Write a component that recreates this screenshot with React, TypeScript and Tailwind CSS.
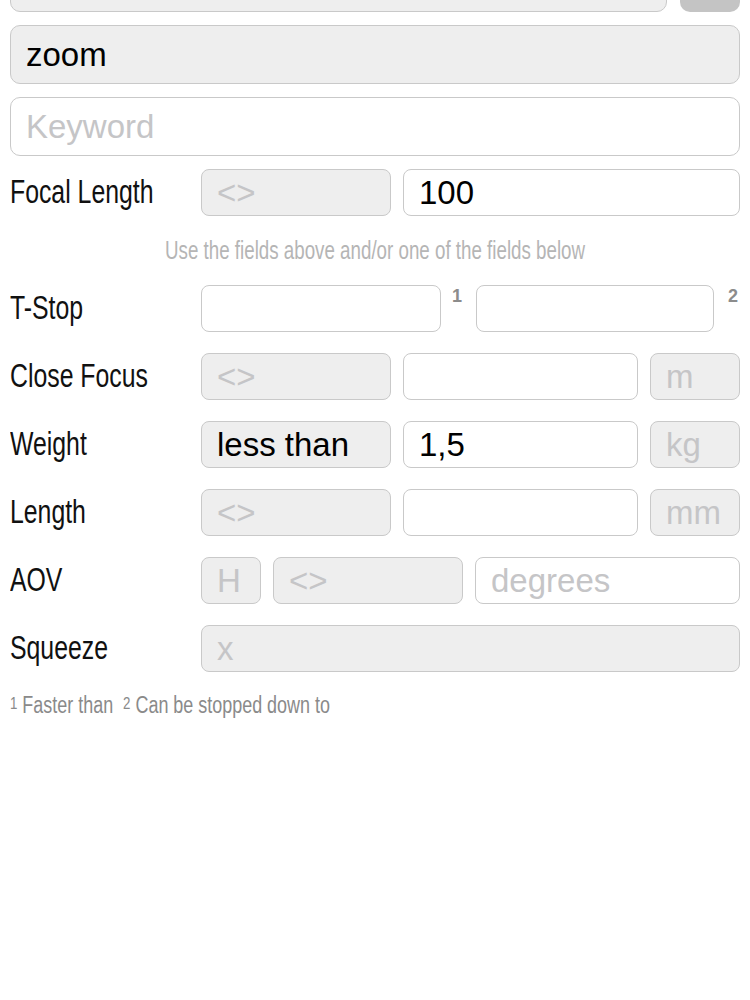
import React from "react";

const sans = "font-['Liberation_Sans',Arial,sans-serif]";

function Narrow({
  children,
  scale = "scale-x-[0.73]",
  origin = "origin-left",
}: {
  children: React.ReactNode;
  scale?: string;
  origin?: string;
}) {
  return <span className={`inline-block whitespace-nowrap ${origin} ${scale}`}>{children}</span>;
}

function Field({
  text,
  placeholder,
  gray,
  className = "",
  big,
}: {
  text?: string;
  placeholder?: string;
  gray?: boolean;
  className?: string;
  big?: boolean;
}) {
  return (
    <div
      className={`${className} flex items-center border border-[#c9c9c9] px-[15px] ${
        big ? "h-[59px] rounded-[10px]" : "h-[47px] rounded-[8px]"
      } ${gray ? "bg-[#eeeeee]" : "bg-white"} ${sans} text-[33px] leading-none overflow-hidden whitespace-nowrap`}
    >
      {text ? (
        <span className="text-black">{text}</span>
      ) : placeholder ? (
        <span className="text-[#c5c5c7]">{placeholder}</span>
      ) : null}
    </div>
  );
}

function Label({ children }: { children: React.ReactNode }) {
  return (
    <div className={`w-[191px] shrink-0 pb-[4px] ${sans} text-[34px] leading-none text-[#111111]`}>
      <Narrow>{children}</Narrow>
    </div>
  );
}

function Sup({ n, className }: { n: string; className: string }) {
  return (
    <div className={`${className} self-start ${sans} font-bold text-[18px] leading-none text-[#8c8c8c]`}>
      {n}
    </div>
  );
}

export default function App() {
  return (
    <div className="w-[750px] h-[1000px] bg-white px-[10px] overflow-hidden">
      <div className="flex gap-[13px] mt-[-47px]">
        <Field big gray className="flex-1" />
        <div className="w-[60px] h-[59px] rounded-[10px] bg-[#c4c4c4]" />
      </div>
      <Field big gray text="zoom" className="mt-[13px]" />
      <Field big placeholder="Keyword" className="mt-[13px]" />

      <div className="flex items-center mt-[13px] h-[47px]">
        <Label>Focal Length</Label>
        <Field gray placeholder="<>" className="w-[190px] shrink-0" />
        <Field text="100" className="flex-1 ml-[12px]" />
      </div>

      <div className={`h-[69px] flex items-center justify-center ${sans} text-[25px] leading-none text-[#b5b5b5]`}>
        <Narrow scale="scale-x-[0.75]" origin="origin-center">
          Use the fields above and/or one of the fields below
        </Narrow>
      </div>

      <div className="flex flex-col gap-[21px]">
        <div className="flex items-center h-[47px]">
          <Label>T-Stop</Label>
          <Field className="w-[240px] shrink-0" />
          <Sup n="1" className="w-[35px] shrink-0 pl-[11px] pt-[2px]" />
          <Field className="w-[238px] shrink-0" />
          <Sup n="2" className="flex-1 pl-[14px] pt-[2px]" />
        </div>

        <div className="flex items-center h-[47px]">
          <Label>Close Focus</Label>
          <Field gray placeholder="<>" className="w-[190px] shrink-0" />
          <Field className="w-[235px] shrink-0 ml-[12px]" />
          <Field gray placeholder="m" className="flex-1 ml-[12px]" />
        </div>

        <div className="flex items-center h-[47px]">
          <Label>Weight</Label>
          <Field gray text="less than" className="w-[190px] shrink-0" />
          <Field text="1,5" className="w-[235px] shrink-0 ml-[12px]" />
          <Field gray placeholder="kg" className="flex-1 ml-[12px]" />
        </div>

        <div className="flex items-center h-[47px]">
          <Label>Length</Label>
          <Field gray placeholder="<>" className="w-[190px] shrink-0" />
          <Field className="w-[235px] shrink-0 ml-[12px]" />
          <Field gray placeholder="mm" className="flex-1 ml-[12px]" />
        </div>

        <div className="flex items-center h-[47px]">
          <Label>AOV</Label>
          <Field gray placeholder="H" className="w-[60px] shrink-0" />
          <Field gray placeholder="<>" className="w-[190px] shrink-0 ml-[12px]" />
          <Field placeholder="degrees" className="flex-1 ml-[12px]" />
        </div>

        <div className="flex items-center h-[47px]">
          <Label>Squeeze</Label>
          <Field gray placeholder="x" className="flex-1" />
        </div>
      </div>

      <div className={`h-[66px] flex items-center ${sans} text-[23px] leading-none text-[#8a8a8a]`}>
        <Narrow scale="scale-x-[0.78]">
          <span className="text-[17px] align-[4px]">1</span> Faster than&nbsp;&nbsp;
          <span className="text-[17px] align-[4px]">2</span> Can be stopped down to
        </Narrow>
      </div>
    </div>
  );
}
